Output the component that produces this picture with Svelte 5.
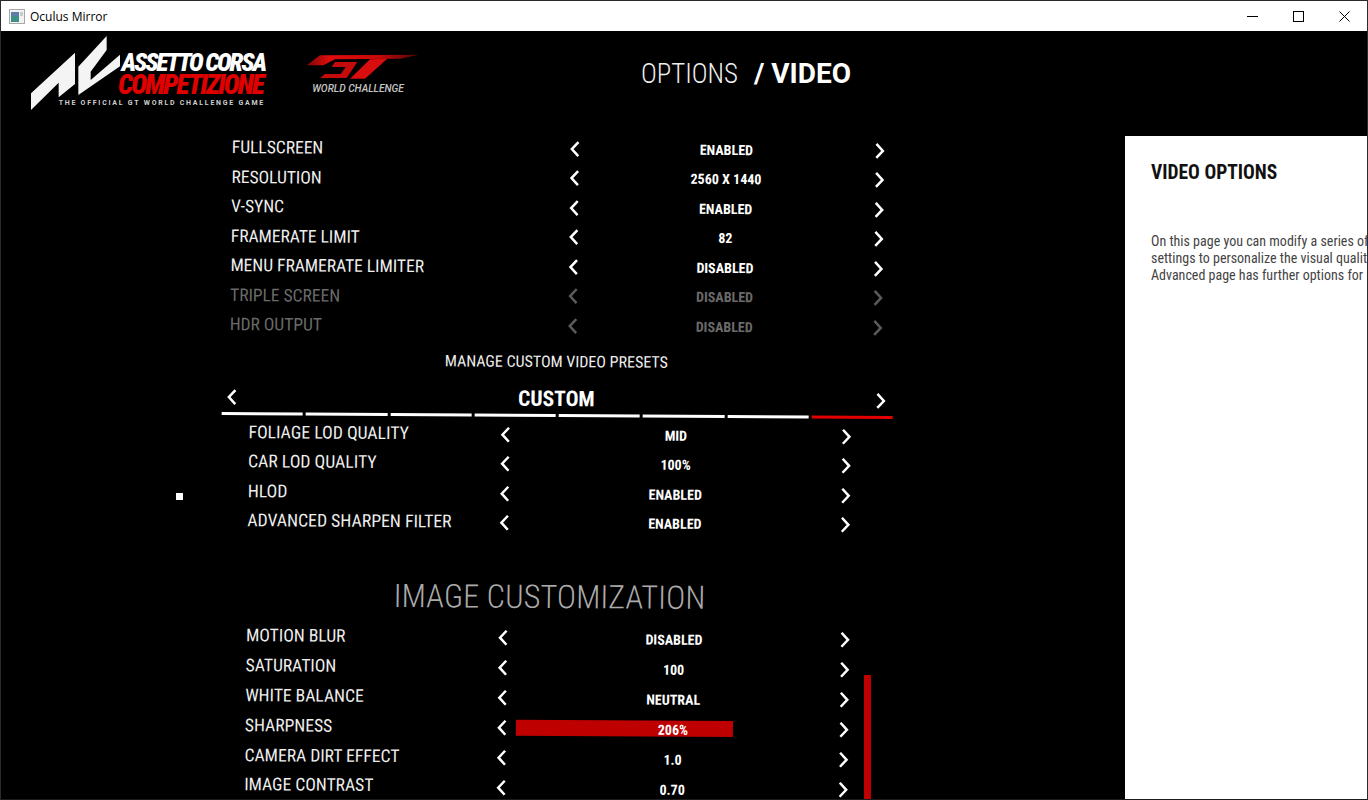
<script>
  const general = [
    { label: 'FULLSCREEN', value: 'ENABLED' },
    { label: 'RESOLUTION', value: '2560 X 1440' },
    { label: 'V-SYNC', value: 'ENABLED' },
    { label: 'FRAMERATE LIMIT', value: '82' },
    { label: 'MENU FRAMERATE LIMITER', value: 'DISABLED' },
    { label: 'TRIPLE SCREEN', value: 'DISABLED', dim: true },
    { label: 'HDR OUTPUT', value: 'DISABLED', dim: true }
  ];
  const quality = [
    { label: 'FOLIAGE LOD QUALITY', value: 'MID' },
    { label: 'CAR LOD QUALITY', value: '100%' },
    { label: 'HLOD', value: 'ENABLED' },
    { label: 'ADVANCED SHARPEN FILTER', value: 'ENABLED' }
  ];
  const image = [
    { label: 'MOTION BLUR', value: 'DISABLED' },
    { label: 'SATURATION', value: '100' },
    { label: 'WHITE BALANCE', value: 'NEUTRAL' },
    { label: 'SHARPNESS', value: '206%', active: true },
    { label: 'CAMERA DIRT EFFECT', value: '1.0' },
    { label: 'IMAGE CONTRAST', value: '0.70' }
  ];
  const tabs = [0, 1, 2, 3, 4, 5, 6, 7];
</script>

{#snippet chevron(dir)}
  <svg class="chev" viewBox="0 0 12 18" width="12" height="18" aria-hidden="true">
    <path d={dir === 'l' ? 'M9.5 2 L3 9 L9.5 16' : 'M2.5 2 L9 9 L2.5 16'} />
  </svg>
{/snippet}

{#snippet rows(list, cls)}
  <div class="group {cls}">
    {#each list as r}
      <div class="row" class:dim={r.dim}>
        <span class="label">{r.label}</span>
        {@render chevron('l')}
        <span class="value" class:active={r.active}><b>{r.value}</b></span>
        {@render chevron('r')}
      </div>
    {/each}
  </div>
{/snippet}

<div class="window">
  <header class="titlebar">
    <svg class="appicon" viewBox="0 0 16 15" width="16" height="15" aria-hidden="true">
      <rect x="0.5" y="0.5" width="15" height="14" fill="#f2f2f2" stroke="#a8a8a8" />
      <rect x="2" y="3" width="8" height="10" fill="#3f8f88" />
      <rect x="2" y="3" width="8" height="4" fill="#5c7fa8" />
      <rect x="11" y="3" width="3" height="4" fill="#c4ccd2" />
    </svg>
    <span class="wintitle">Oculus Mirror</span>
    <div class="controls">
      <span class="ctl"><svg viewBox="0 0 11 11" width="11" height="11"><path d="M0 5.5H11" /></svg></span>
      <span class="ctl"><svg viewBox="0 0 11 11" width="11" height="11"><rect x="0.5" y="0.5" width="10" height="10" /></svg></span>
      <span class="ctl"><svg viewBox="0 0 11 11" width="11" height="11"><path d="M0.5 0.5L10.5 10.5M10.5 0.5L0.5 10.5" /></svg></span>
    </div>
  </header>

  <main class="stage">
    <div class="top">
      <div class="brand">
        <svg class="mark" viewBox="0 3 300 240" width="100" height="80" aria-hidden="true">
          <polygon points="33,190 165,68 165,162 116,202 116,158 33,240" />
          <polygon points="175,110 260,18 260,60 212,125 212,150 305,70 305,105 175,195" />
        </svg>
        <div class="wordmark">
          <span class="w1">ASSETTO CORSA</span>
          <span class="w2">COMPETIZIONE</span>
          <span class="w3">THE OFFICIAL GT WORLD CHALLENGE GAME</span>
        </div>
      </div>
      <div class="gt">
        <svg viewBox="0 0 375 90" width="125" height="30" aria-hidden="true">
          <defs>
            <linearGradient id="gtg" x1="0" x2="1" y1="0" y2="0">
              <stop offset="0" stop-color="#7a0505" />
              <stop offset="0.2" stop-color="#e00d0d" />
              <stop offset="0.65" stop-color="#c40808" />
              <stop offset="1" stop-color="#4a0404" />
            </linearGradient>
          </defs>
          <polygon fill="url(#gtg)" points="20,40 60,10 358,8 300,20 105,22 70,40" />
          <polygon fill="#c40a0a" points="105,30 172,30 140,78 60,78 75,66 122,66 137,45 95,45" />
          <polygon fill="#d80d0d" points="210,22 262,20 195,80 150,80" />
        </svg>
        <span class="gtname">WORLD CHALLENGE</span>
      </div>
      <h1 class="pagetitle"><span class="light">OPTIONS</span><b>/ VIDEO</b></h1>
    </div>

    <div class="body">
      <section class="settings">
        {@render rows(general, 'g1')}
        <h2 class="manage">MANAGE CUSTOM VIDEO PRESETS</h2>
        <div class="preset">
          {@render chevron('l')}
          <strong>CUSTOM</strong>
          {@render chevron('r')}
        </div>
        <div class="tabs">
          {#each tabs as t}
            <i class:on={t === 7}></i>
          {/each}
        </div>
        {@render rows(quality, 'g2')}
        <h2 class="section">IMAGE CUSTOMIZATION</h2>
        {@render rows(image, 'g3')}
      </section>
      <aside class="help">
        <h3>VIDEO OPTIONS</h3>
        <p>On this page you can modify a series of<br />settings to personalize the visual quality<br />Advanced page has further options for</p>
      </aside>
    </div>
    <div class="scroll"></div>
    <div class="cursor"></div>
  </main>
</div>

<style>
  :global(body) { margin: 0; background: #000; }
  .window {
    width: 1368px; height: 800px; box-sizing: border-box; overflow: hidden;
    border: 1px solid #2b2b2b; border-bottom-color: #1c1c1c;
    display: flex; flex-direction: column;
    font-family: Roboto, "Liberation Sans", sans-serif; font-stretch: 75%;
  }
  .titlebar {
    height: 30px; flex: none; background: #fff; display: flex; align-items: center;
    padding-left: 8px; color: #000;
  }
  .appicon { margin-right: 5px; }
  .wintitle { font: 12px "Open Sans", "Noto Sans", sans-serif; }
  .controls { margin-left: auto; display: flex; }
  .ctl { width: 46px; height: 30px; display: flex; align-items: center; justify-content: center; }
  .ctl svg { fill: none; stroke: #000; stroke-width: 1; }

  .stage { flex: 1; background: #000; color: #fff; position: relative; min-height: 0; display: flex; flex-direction: column; }
  .top { height: 105px; flex: none; display: flex; align-items: flex-start; position: relative; }
  .brand { display: flex; margin: 0 0 0 19px; width: 280px; }
  .mark { fill: #f4f4f4; flex: none; margin-right: -5px; }
  .wordmark { display: flex; flex-direction: column; align-items: flex-end; margin-top: 21px; width: 150px; white-space: nowrap; }
  .w1 { font-size: 25px; font-weight: 900; font-style: italic; line-height: 22px; letter-spacing: -2.1px; }
  .w2 { font-size: 27px; font-weight: 900; font-style: italic; line-height: 22px; color: #e00000; letter-spacing: -1.8px; margin-right: 2px; }
  .w3 { font-size: 7px; font-weight: 700; letter-spacing: 1.75px; color: #cfcfcf; line-height: 10px; margin-top: 2px; font-stretch: 100%; }
  .gt { display: flex; flex-direction: column; align-items: center; width: 125px; margin-top: 21px; }
  .gtname { font-size: 10.2px; font-weight: 500; font-style: italic; color: #c4c4c4; margin: 1px 9px 0 0; font-stretch: 100%; white-space: nowrap; }
  .pagetitle { margin: 0 0 0 216px; padding-top: 25px; font-size: 26.8px; line-height: 36px; display: flex; gap: 16px; font-weight: 400; white-space: nowrap; }
  .pagetitle b { font-size: 28px; font-stretch: 96%; }
  .light { font-weight: 300; color: #eee; }

  .body { flex: 1; display: flex; min-height: 0; }
  .settings {
    width: 680px; margin: -4px 0 0 221px; position: relative; flex: none;
    transform-origin: 0 4px; transform: matrix(1, 0.006, -0.012, 1, 0, 0);
  }
  .row { display: grid; align-items: center; height: 29.5px; }
  .g1 .row { grid-template-columns: 337px 12px 293px 12px; padding-left: 10px; }
  .g2 .row { grid-template-columns: 251px 12px 329px 12px; padding-left: 30px; }
  .g3 .row { grid-template-columns: 251px 12px 330px 12px; height: 29.9px; padding-left: 30px; }
  .label { font-size: 17.5px; color: #eee; white-space: nowrap; }
  .g1 .label { margin-top: 1px; }
  .g2 .label { font-size: 17.75px; margin-top: -2px; }
  .g3 .label { font-size: 17.6px; margin-top: -3px; }
  .value { text-align: center; font-size: 14px; position: relative; }
  .value b { font-weight: 700; position: relative; }
  .g3 .value b { top: 1px; }
  .g1 .value { padding-right: 2px; }
  .value.active::before { content: ""; position: absolute; left: 8px; width: 217px; top: 0; bottom: 0; background: #bf0000; }
  .chev { fill: none; stroke: #fff; stroke-width: 2.5; }
  .dim .label, .dim .value { color: #6a6a6a; }
  .dim .chev { stroke: #5a5a5a; }
  .manage { margin: 11px 0 0; height: 20px; line-height: 20px; width: 674px; text-align: center; font-size: 16px; font-weight: 400; color: #eee; }
  .preset { display: flex; align-items: center; justify-content: space-between; margin: 12px 0 0 7px; width: 661px; height: 30px; }
  .preset strong { font-size: 21.5px; font-weight: 700; }
  .tabs { display: flex; gap: 3px; width: 671px; margin: 0 0 0 3px; }
  .tabs i { flex: 1; height: 3.5px; background: #fff; }
  .tabs i.on { background: #e50000; }
  .g2 { margin-top: 3px; }
  .section { margin: 41px 0 8.5px; height: 36px; line-height: 36px; width: 666px; text-align: center; font-size: 32.5px; font-weight: 300; color: #aaa; }
  .scroll { position: absolute; left: 863px; top: 644px; bottom: 0; width: 6.5px; background: #bf0000; }

  .help { margin-left: auto; width: 242px; background: #fff; color: #111; padding: 24px 0 0 26px; box-sizing: border-box; overflow: hidden; white-space: nowrap; }
  .help h3 { margin: 0; font-size: 19.5px; line-height: 26px; font-weight: 700; }
  .help p { margin: 47px 0 0; font-size: 14px; line-height: 17px; color: #444; }
  .cursor { position: absolute; left: 175px; top: 462px; width: 7px; height: 7px; background: #fff; }
</style>
